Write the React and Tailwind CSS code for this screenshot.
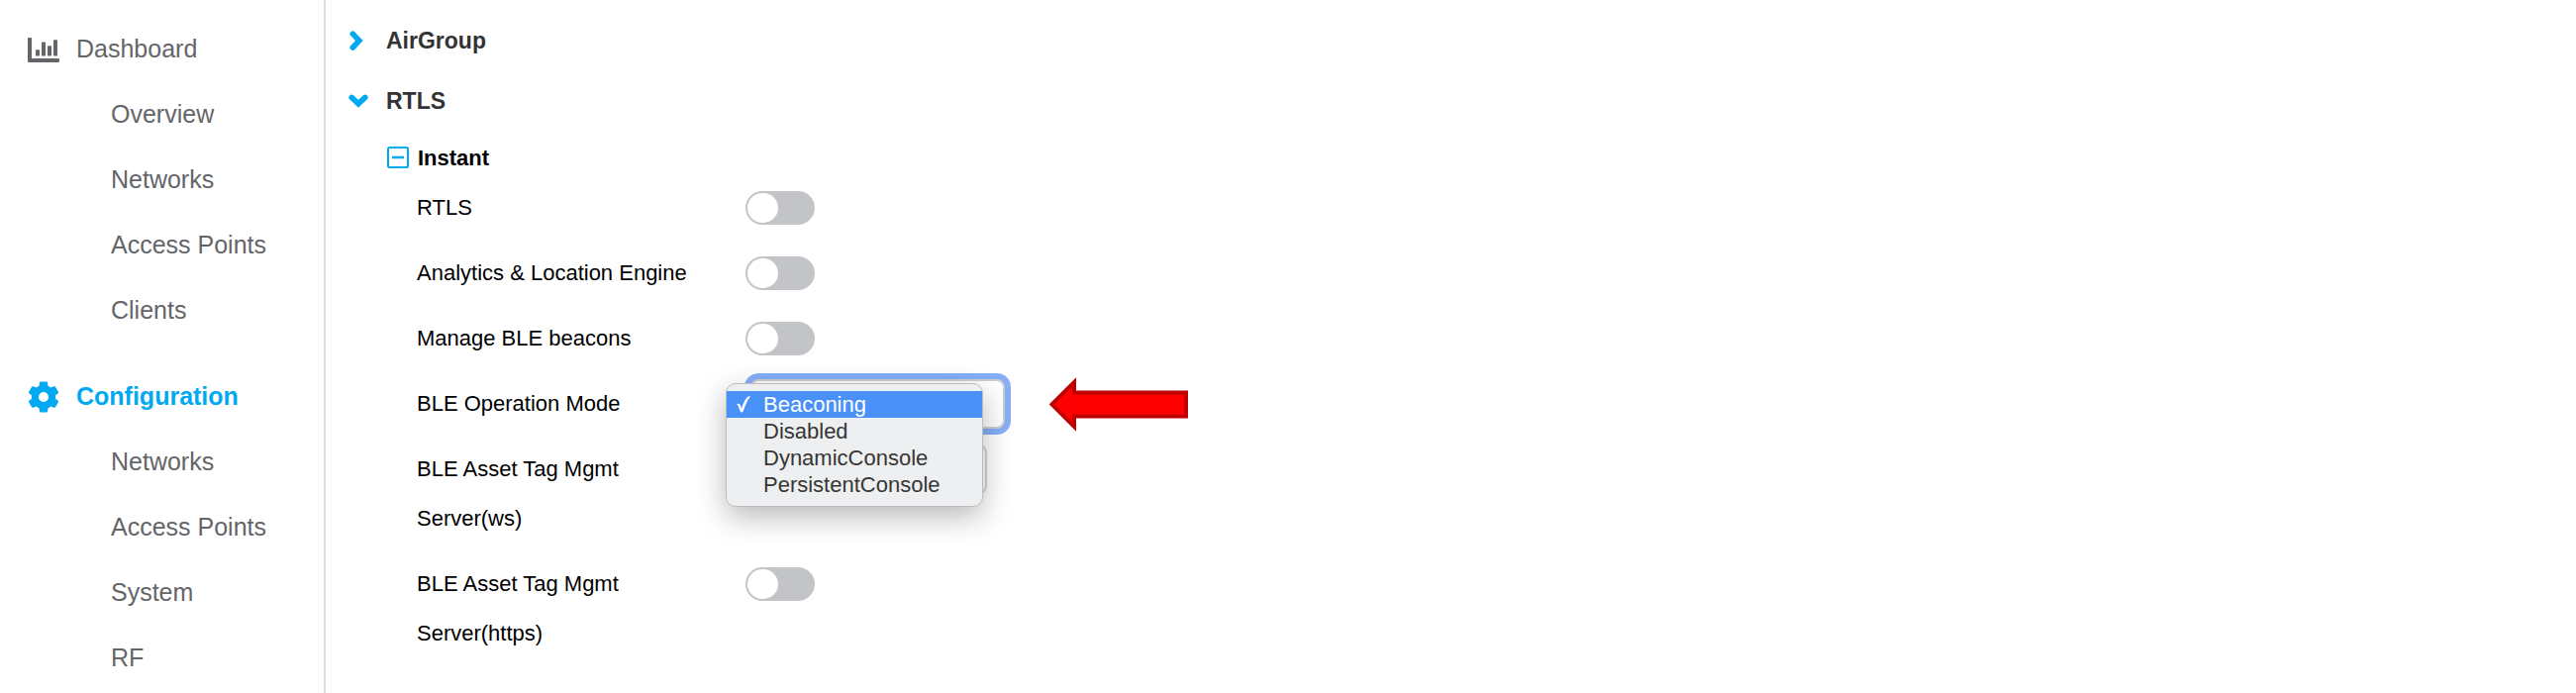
const sections = [
  { title: "Dashboard", icon: ChartIcon, items: ["Overview", "Networks", "Access Points", "Clients"] },
  { title: "Configuration", icon: GearIcon, active: true, items: ["Networks", "Access Points", "System", "RF"] },
];

const modes = ["Beaconing", "Disabled", "DynamicConsole", "PersistentConsole"];

function ChartIcon() {
  return (
    <svg className="h-[25px] w-8" viewBox="0 0 32 25" fill="currentColor" aria-hidden="true">
      <path d="M0 1Q0 0 1 0H3Q4 0 4 1V21H31Q32 21 32 22V24Q32 25 31 25H1Q0 25 0 24Z" />
      <rect x="8" y="12.2" width="4" height="6.2" rx=".6" />
      <rect x="14" y="4.4" width="4" height="14" rx=".6" />
      <rect x="20" y="8.3" width="4" height="10.1" rx=".6" />
      <rect x="26" y="2.3" width="4" height="16.1" rx=".6" />
    </svg>
  );
}

function GearIcon() {
  return (
    <svg className="h-8 w-8" viewBox="-16 -16 32 32" fill="currentColor" aria-hidden="true">
      <circle r="8.6" fill="none" stroke="currentColor" strokeWidth="7" />
      {[0, 60, 120].map((angle) => (
        <g key={angle} transform={`rotate(${angle})`}>
          <path d="M-4.6-11-4-14.600Q-3.800-15.500-2.900-15.500H2.900Q3.800-15.500 4-14.600L4.600-11Z" />
          <path d="M-4.6 11-4 14.600Q-3.800 15.500-2.900 15.500H2.900Q3.800 15.500 4 14.600L4.600 11Z" />
        </g>
      ))}
    </svg>
  );
}

function Chevron({ open }) {
  return (
    <svg className="h-[22px] w-[22px]" viewBox="0 0 22 22" fill="none" stroke="#01a9f0" strokeWidth="5.600" strokeLinecap="round" strokeLinejoin="miter" aria-hidden="true">
      <path d={open ? "M3.2 6.4 10 12.8 16.8 6.4" : "M4.3 3.2 10.8 10.1 4.3 17"} />
    </svg>
  );
}

function SectionHeader({ title, open }) {
  return (
    <h2>
      <button type="button" aria-expanded={open} className="flex h-[61px] items-center gap-4 text-[23px] font-bold text-[#333333]">
        <Chevron open={open} />
        {title}
      </button>
    </h2>
  );
}

function Row({ id, label, children }) {
  return (
    <div className="flex items-start py-2">
      <label htmlFor={id} className="w-[332px] shrink-0 pr-8 leading-[50px]">
        {label}
      </label>
      <div className="flex h-[50px] items-center">{children}</div>
    </div>
  );
}

function Toggle({ id }) {
  return (
    <input
      id={id}
      type="checkbox"
      role="switch"
      className="h-[34px] w-[70px] cursor-pointer appearance-none rounded-full bg-[#c3c4c8] p-[2px] before:block before:h-[30px] before:w-[31px] before:rounded-full before:bg-white checked:bg-[#01a9f0] checked:before:translate-x-[35px]"
    />
  );
}

function ModeSelect({ id }) {
  return (
    <div className="relative">
      <select
        id={id}
        defaultValue="Beaconing"
        className="ml-[5px] block h-[50px] w-[257px] appearance-none rounded-lg border-2 border-[#cfcfcf] bg-white pl-3 outline-none ring-6 ring-[#86aff8]"
      >
        {modes.map((m) => (
          <option key={m}>{m}</option>
        ))}
      </select>
      <ul
        role="listbox"
        aria-label="BLE Operation Mode"
        className="absolute top-1 -left-5 w-[260px] rounded-[10px] border border-[#bdbdbf] bg-[#eeeff0] pt-[7px] pb-2 leading-[27px] text-[#363636] shadow-[0_10px_30px_rgba(0,0,0,0.28)]"
      >
        {modes.map((m, i) => (
          <li
            key={m}
            role="option"
            aria-selected={i === 0}
            className={i === 0 ? "flex items-center bg-[#4a90f9] text-white" : "flex items-center"}
          >
            <span className="flex w-[37px] pl-[9px]">
              {i === 0 && (
                <svg className="h-[17px] w-4" viewBox="0 0 16 17" fill="currentColor" aria-hidden="true">
                  <path d="M1 8.8C2.300 7.300 4.200 7.300 4.900 9.500L6 12.400C7.500 7.800 9.700 3.500 12.200.8Q13 0 15 .2C11.800 4.500 9.600 9.500 8 14.800Q7.400 16.500 5.900 16.400 4.800 16.300 4.400 14.800L3 10.700Q2.400 9 1 8.800Z" />
                </svg>
              )}
            </span>
            {m}
          </li>
        ))}
      </ul>
    </div>
  );
}

export default function App() {
  return (
    <div className="flex min-h-screen w-full bg-white font-['Liberation_Sans',Arial,sans-serif]">
      <nav aria-label="Main" className="flex w-[329px] shrink-0 flex-col gap-[21px] border-r-2 border-[#dcdde3] pt-[17px] text-[25px] text-[#646569]">
        {sections.map(({ title, icon: Icon, active, items }) => (
          <div key={title}>
            <a href="#" className={active ? "flex h-[66px] items-center gap-[17px] pl-7 font-bold text-[#01a9f0]" : "flex h-[66px] items-center gap-[17px] pl-7"}>
              <Icon />
              {title}
            </a>
            <ul>
              {items.map((item) => (
                <li key={item}>
                  <a href="#" className="flex h-[66px] items-center pl-28">
                    {item}
                  </a>
                </li>
              ))}
            </ul>
          </div>
        ))}
      </nav>

      <main className="min-w-0 flex-1 pt-[11px] pl-[23px] text-[22px] text-black">
        <SectionHeader title="AirGroup" open={false} />
        <SectionHeader title="RTLS" open={true} />
        <section className="pl-[39px]">
          <h3>
            <button type="button" aria-expanded="true" className="flex h-11 items-center gap-[9px] pt-4 pb-2 font-bold">
              <svg className="h-[22px] w-[22px]" viewBox="0 0 22 22" fill="none" stroke="#01a9f0" strokeWidth="2" aria-hidden="true">
                <rect x="1" y="1" width="20" height="20" rx="1.5" />
                <path d="M5 11H17" strokeWidth="2.5" />
              </svg>
              Instant
            </button>
          </h3>
          <div className="pl-[30px]">
            <Row id="rtls" label="RTLS">
              <Toggle id="rtls" />
            </Row>
            <Row id="ale" label="Analytics &amp; Location Engine">
              <Toggle id="ale" />
            </Row>
            <Row id="beacons" label="Manage BLE beacons">
              <Toggle id="beacons" />
            </Row>
            <Row id="mode" label="BLE Operation Mode">
              <ModeSelect id="mode" />
              <svg className="ml-[45px] h-[55px] w-[140px]" viewBox="0 0 140 55" aria-hidden="true">
                <path d="M2.5 27.5 25 5V15.5H138V39.500H25V50Z" fill="#ff0000" stroke="#c00000" strokeWidth="4" />
              </svg>
            </Row>
            <Row id="ws" label="BLE Asset Tag Mgmt Server(ws)">
              <input id="ws" type="text" className="ml-1 h-[50px] w-[240px] rounded-lg border-2 border-[#d6d6d6] px-3" />
            </Row>
            <Row id="https" label="BLE Asset Tag Mgmt Server(https)">
              <Toggle id="https" />
            </Row>
          </div>
        </section>
      </main>
    </div>
  );
}
